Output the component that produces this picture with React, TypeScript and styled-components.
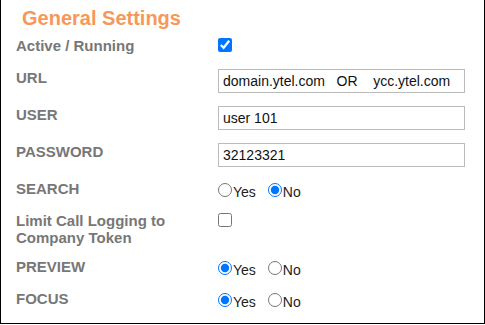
import React from "react";
import styled, { createGlobalStyle } from "styled-components";

const GlobalStyle = createGlobalStyle`
  html, body {
    margin: 0;
    padding: 0;
    background: #fff;
  }
  body {
    font-family: "Liberation Sans", Arial, sans-serif;
  }
`;

type Choice = "yes" | "no";

const rows: { label: string; value: string }[] = [
  { label: "URL", value: "domain.ytel.com   OR    ycc.ytel.com" },
  { label: "USER", value: "user 101" },
  { label: "PASSWORD", value: "32123321" },
];

export default function App() {
  return (
    <>
      <GlobalStyle />
      <Panel>
        <Title>General Settings</Title>

        <Row $height={32}>
          <Label>Active / Running</Label>
          <div>
            <Check type="checkbox" defaultChecked />
          </div>
        </Row>

        {rows.map((r) => (
          <Row key={r.label} $height={37}>
            <Label>{r.label}</Label>
            <div>
              <TextInput type="text" defaultValue={r.value} />
            </div>
          </Row>
        ))}

        <Row $height={32}>
          <Label>SEARCH</Label>
          <YesNo name="search" value="no" />
        </Row>

        <Row $height={46}>
          <Label>Limit Call Logging to Company Token</Label>
          <div>
            <Check type="checkbox" />
          </div>
        </Row>

        <Row $height={32}>
          <Label>PREVIEW</Label>
          <YesNo name="preview" value="yes" />
        </Row>

        <Row $height={32}>
          <Label>FOCUS</Label>
          <YesNo name="focus" value="yes" />
        </Row>
      </Panel>
    </>
  );
}

function YesNo({ name, value }: { name: string; value: Choice }) {
  return (
    <Radios>
      <Option>
        <Radio type="radio" name={name} defaultChecked={value === "yes"} />
        Yes
      </Option>
      <Option>
        <Radio type="radio" name={name} defaultChecked={value === "no"} />
        No
      </Option>
    </Radios>
  );
}

const Panel = styled.div`
  box-sizing: border-box;
  width: 485px;
  height: 324px;
  border: 1px solid #000;
  border-top: none;
  padding: 6px 0 0 15px;
  background: #fff;
  overflow: hidden;
`;

const Title = styled.div`
  margin: 0 0 7px 6px;
  font-size: 20px;
  line-height: 24px;
  font-weight: bold;
  color: #f7985a;
`;

const Row = styled.div<{ $height: number }>`
  display: grid;
  grid-template-columns: 202px 247px;
  align-items: start;
  height: ${(p) => p.$height}px;
`;

const Label = styled.div`
  font-size: 15px;
  line-height: 17px;
  font-weight: bold;
  color: #777;
`;

const Check = styled.input`
  display: block;
  width: 14px;
  height: 14px;
  margin: 1px 0 0 0;
  accent-color: #0075ff;
`;

const TextInput = styled.input`
  box-sizing: border-box;
  display: block;
  width: 247px;
  height: 24px;
  margin: 0;
  padding: 0 4px;
  border: 1px solid #bbb;
  border-radius: 0;
  font-family: "Liberation Sans", Arial, sans-serif;
  font-size: 14px;
  color: #111;
  outline: none;
`;

const Radios = styled.div`
  padding-top: 3px;
  font-size: 14px;
  line-height: 17px;
  color: #222;
  white-space: nowrap;
`;

const Option = styled.label`
  display: inline-block;
  margin-right: 12px;
`;

const Radio = styled.input`
  width: 14px;
  height: 14px;
  margin: 0 1px 0 0;
  vertical-align: baseline;
  accent-color: #0075ff;
`;
